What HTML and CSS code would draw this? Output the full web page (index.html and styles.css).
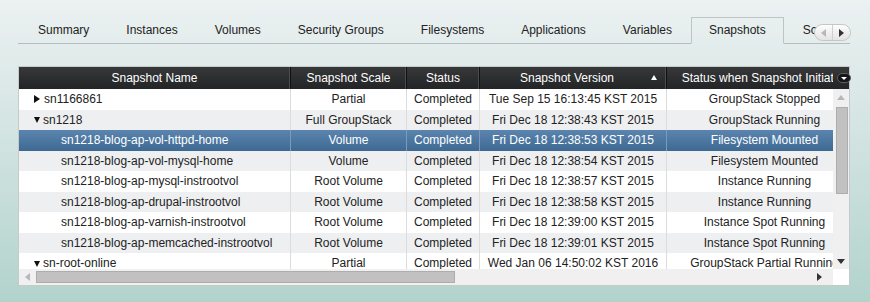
FILE: index.html
```html
<!DOCTYPE html>
<html lang="en">
<head>
    <meta charset="UTF-8">
    <title>Snapshots</title>
    <link rel="stylesheet" href="styles.css">
</head>
<body>
    <div class="tabstrip">
        <div class="tabbar">
            <div class="tab-edge"></div>
            <div class="tab">Summary</div>
            <div class="tab">Instances</div>
            <div class="tab">Volumes</div>
            <div class="tab">Security Groups</div>
            <div class="tab">Filesystems</div>
            <div class="tab">Applications</div>
            <div class="tab">Variables</div>
            <div class="tab active">Snapshots</div>
            <div class="tab">Scripts</div>
        </div>
        <div class="tab-scroll">
            <span class="tab-btn"><i class="arr-left off"></i></span>
            <span class="tab-btn"><i class="arr-right"></i></span>
        </div>
    </div>

    <div class="grid">
        <div class="grid-head">
            <div class="head-view">
                <div class="row head-row">
                    <div class="hcell">Snapshot Name</div>
                    <div class="hcell">Snapshot Scale</div>
                    <div class="hcell">Status</div>
                    <div class="hcell sorted">Snapshot Version<i class="sort-up"></i></div>
                    <div class="hcell">Status when Snapshot Initiated</div>
                </div>
            </div>
            <div class="head-corner"><span class="col-menu"><i></i></span></div>
        </div>

        <div class="grid-main">
            <div class="body-view">
                <div class="row">
                    <div class="cell name top"><i class="tw-closed"></i>sn1166861</div>
                    <div class="cell">Partial</div>
                    <div class="cell">Completed</div>
                    <div class="cell">Tue Sep 15 16:13:45 KST 2015</div>
                    <div class="cell">GroupStack Stopped</div>
                </div>
                <div class="row alt">
                    <div class="cell name top"><i class="tw-open"></i>sn1218</div>
                    <div class="cell">Full GroupStack</div>
                    <div class="cell">Completed</div>
                    <div class="cell">Fri Dec 18 12:38:43 KST 2015</div>
                    <div class="cell">GroupStack Running</div>
                </div>
                <div class="row selected">
                    <div class="cell name child">sn1218-blog-ap-vol-httpd-home</div>
                    <div class="cell">Volume</div>
                    <div class="cell">Completed</div>
                    <div class="cell">Fri Dec 18 12:38:53 KST 2015</div>
                    <div class="cell">Filesystem Mounted</div>
                </div>
                <div class="row alt">
                    <div class="cell name child">sn1218-blog-ap-vol-mysql-home</div>
                    <div class="cell">Volume</div>
                    <div class="cell">Completed</div>
                    <div class="cell">Fri Dec 18 12:38:54 KST 2015</div>
                    <div class="cell">Filesystem Mounted</div>
                </div>
                <div class="row">
                    <div class="cell name child">sn1218-blog-ap-mysql-instrootvol</div>
                    <div class="cell">Root Volume</div>
                    <div class="cell">Completed</div>
                    <div class="cell">Fri Dec 18 12:38:57 KST 2015</div>
                    <div class="cell">Instance Running</div>
                </div>
                <div class="row alt">
                    <div class="cell name child">sn1218-blog-ap-drupal-instrootvol</div>
                    <div class="cell">Root Volume</div>
                    <div class="cell">Completed</div>
                    <div class="cell">Fri Dec 18 12:38:58 KST 2015</div>
                    <div class="cell">Instance Running</div>
                </div>
                <div class="row">
                    <div class="cell name child">sn1218-blog-ap-varnish-instrootvol</div>
                    <div class="cell">Root Volume</div>
                    <div class="cell">Completed</div>
                    <div class="cell">Fri Dec 18 12:39:00 KST 2015</div>
                    <div class="cell">Instance Spot Running</div>
                </div>
                <div class="row alt">
                    <div class="cell name child">sn1218-blog-ap-memcached-instrootvol</div>
                    <div class="cell">Root Volume</div>
                    <div class="cell">Completed</div>
                    <div class="cell">Fri Dec 18 12:39:01 KST 2015</div>
                    <div class="cell">Instance Spot Running</div>
                </div>
                <div class="row">
                    <div class="cell name top"><i class="tw-open"></i>sn-root-online</div>
                    <div class="cell">Partial</div>
                    <div class="cell">Completed</div>
                    <div class="cell">Wed Jan 06 14:50:02 KST 2016</div>
                    <div class="cell">GroupStack Partial Running</div>
                </div>
            </div>
            <div class="vscroll">
                <span class="sb-btn"><i class="arr-up off"></i></span>
                <span class="v-thumb"></span>
                <span class="sb-fill"></span>
                <span class="sb-btn"><i class="arr-down"></i></span>
            </div>
        </div>

        <div class="grid-foot">
            <div class="hscroll">
                <span class="sb-btn"><i class="arr-left off"></i></span>
                <span class="h-thumb"></span>
                <span class="sb-fill"></span>
                <span class="sb-btn"><i class="arr-right"></i></span>
            </div>
            <div class="foot-corner"></div>
        </div>
    </div>
</body>
</html>
```

FILE: styles.css
```css
html {
    height: 100%;
}
body {
    margin: 0;
    min-height: 100%;
    font: 12px "Liberation Sans", Arial, sans-serif;
    color: #222;
    background: linear-gradient(#ecf1f2, #b2d3cc);
}

/* tabs */
.tabstrip {
    position: relative;
    margin-left: 18px;
    width: 832px;
    padding-top: 17px;
}
.tabbar {
    display: flex;
    align-items: flex-end;
    overflow: hidden;
}
.tab-edge {
    flex: 0 0 1.5px;
    height: 27px;
    box-sizing: border-box;
    border-bottom: 1px solid #b9bcbc;
}
.tab {
    flex-shrink: 0;
    box-sizing: border-box;
    height: 27px;
    line-height: 26px;
    padding: 0 18.5px;
    border-bottom: 1px solid #b9bcbc;
    color: #222;
    white-space: nowrap;
}
.tab.active {
    padding: 0 17.5px;
    border: 1px solid #bfc3c3;
    border-bottom-color: transparent;
    line-height: 25px;
}
.tab-scroll {
    position: absolute;
    left: 796px;
    top: 24px;
    display: flex;
    width: 37px;
    height: 17px;
    box-sizing: border-box;
    border: 1px solid #c6c6c6;
    border-radius: 9px;
    background: linear-gradient(#fdfdfd, #e4e4e4);
}
.tab-btn {
    flex: 1;
    display: flex;
    align-items: center;
    justify-content: center;
}
.tab-btn + .tab-btn {
    border-left: 1px solid #cfcfcf;
}

/* arrows */
.arr-left, .arr-right, .arr-up, .arr-down {
    display: block;
    width: 0;
    height: 0;
}
.arr-left {
    border-top: 4px solid transparent;
    border-bottom: 4px solid transparent;
    border-right: 5px solid #333;
}
.arr-right {
    border-top: 4px solid transparent;
    border-bottom: 4px solid transparent;
    border-left: 5px solid #333;
}
.arr-up {
    border-left: 4px solid transparent;
    border-right: 4px solid transparent;
    border-bottom: 5px solid #333;
}
.arr-down {
    border-left: 4px solid transparent;
    border-right: 4px solid transparent;
    border-top: 5px solid #333;
}
.arr-left.off {
    border-right-color: #b8b8b8;
}
.arr-up.off {
    border-bottom-color: #b8b8b8;
}

/* grid panel */
.grid {
    margin: 22px 0 0 18px;
    width: 832px;
    box-sizing: border-box;
    border: 1px solid #c6cbca;
    background: #fff;
}
.grid-head {
    display: flex;
    height: 22px;
    background: linear-gradient(#363839, #232425);
}
.head-view, .body-view, .hscroll {
    width: 814px;
    flex-shrink: 0;
    overflow: hidden;
}
.row {
    display: grid;
    grid-template-columns: 272px 116px 73px 187px 196px;
    width: max-content;
    height: 20.5px;
}
.head-row {
    height: 22px;
}
.hcell {
    position: relative;
    display: flex;
    align-items: center;
    justify-content: center;
    color: #fff;
    white-space: nowrap;
    overflow: hidden;
    border-right: 1px solid #111;
    box-shadow: inset -1px 0 0 #4a4c4d;
}
.hcell.sorted {
    padding-right: 12px;
}
.sort-up {
    position: absolute;
    right: 9px;
    top: 8px;
    width: 0;
    height: 0;
    border-left: 3.5px solid transparent;
    border-right: 3.5px solid transparent;
    border-bottom: 5px solid #fff;
}
.head-corner {
    flex: 1;
    position: relative;
}
.col-menu {
    position: absolute;
    right: -2px;
    top: 6px;
    display: flex;
    align-items: center;
    justify-content: center;
    width: 14px;
    height: 10px;
    box-sizing: border-box;
    border: 1px solid #5a5c5d;
    border-radius: 5px;
    background: #161718;
}
.col-menu i {
    width: 0;
    height: 0;
    border-left: 3px solid transparent;
    border-right: 3px solid transparent;
    border-top: 3px solid #fff;
}

.grid-main {
    display: flex;
    height: 180px;
}
.cell {
    display: flex;
    align-items: center;
    justify-content: center;
    white-space: nowrap;
    overflow: hidden;
    border-right: 1px solid #dcdcdc;
}
.cell.name {
    justify-content: flex-start;
}
.cell.top {
    padding-left: 15px;
}
.cell.child {
    padding-left: 42px;
}
.row.alt {
    background: #eeeff1;
}
.row.selected {
    background: linear-gradient(#5b85ae, #3e6992);
    color: #fff;
}
.row.selected .cell {
    border-right-color: #7c9bba;
}
.tw-closed {
    width: 0;
    height: 0;
    margin-right: 4px;
    border-top: 4px solid transparent;
    border-bottom: 4px solid transparent;
    border-left: 6px solid #111;
}
.tw-open {
    width: 0;
    height: 0;
    margin: 1px 3px 0 0;
    border-left: 3.5px solid transparent;
    border-right: 3.5px solid transparent;
    border-top: 6px solid #111;
}

/* scrollbars */
.vscroll {
    flex: 1;
    display: flex;
    flex-direction: column;
    background: #f0f0f0;
}
.sb-btn {
    flex: 0 0 16px;
    display: flex;
    align-items: center;
    justify-content: center;
}
.sb-fill {
    flex: 1;
}
.v-thumb {
    height: 87px;
    margin: 2px 1px 0 3px;
    box-sizing: border-box;
    border: 1px solid #adadad;
    background: #c1c1c1;
}
.grid-foot {
    display: flex;
    height: 16px;
}
.hscroll {
    display: flex;
    background: #f0f0f0;
}
.h-thumb {
    width: 419px;
    margin: 2px 0 2px 1px;
    box-sizing: border-box;
    border: 1px solid #adadad;
    background: #c1c1c1;
}
.hscroll .sb-btn:last-child {
    justify-content: flex-start;
    padding-left: 4px;
}
.foot-corner {
    flex: 1;
    background: #fff;
}
```
